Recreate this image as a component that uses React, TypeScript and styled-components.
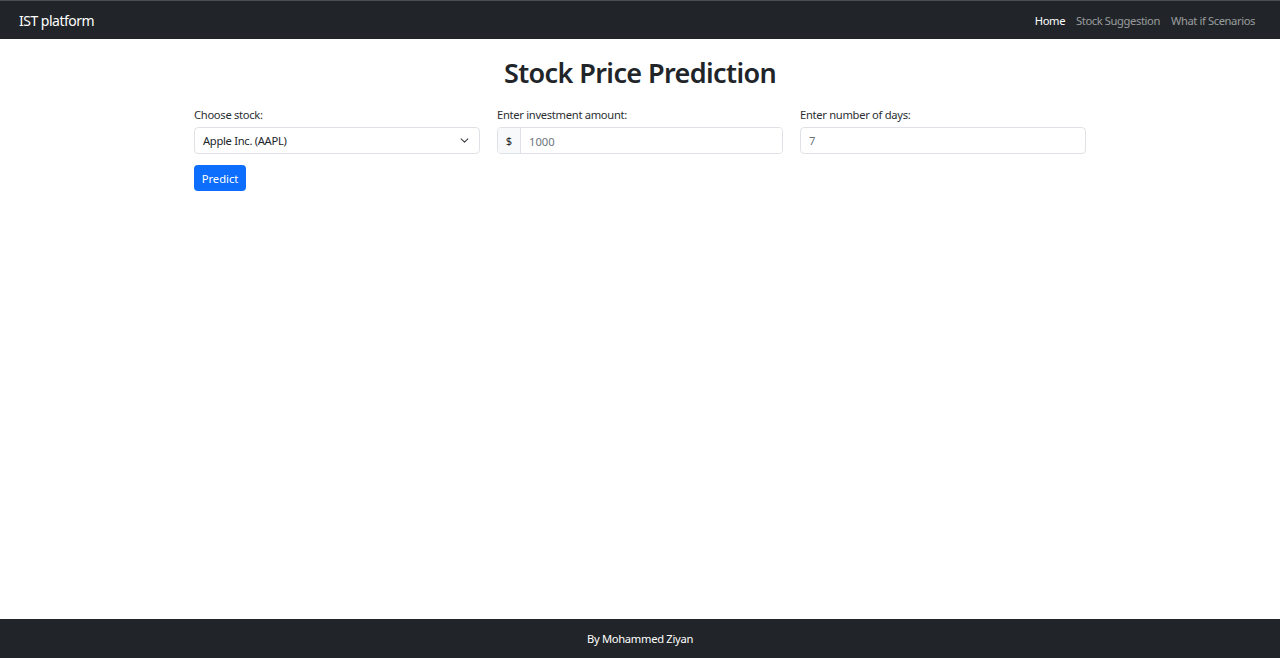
import React, { useState } from 'react';
import styled, { createGlobalStyle } from 'styled-components';

const GlobalStyle = createGlobalStyle`
  html, body {
    margin: 0;
    padding: 0;
    background: #fff;
    font-family: "Noto Sans", "Open Sans", Arial, sans-serif;
    color: #212529;
  }
  * { box-sizing: border-box; }
`;

const Page = styled.div`
  display: flex;
  flex-direction: column;
  min-height: 100vh;
`;

const Navbar = styled.nav`
  height: 39px;
  background: #212529;
  border-top: 1px solid #4b4f54;
  display: flex;
  align-items: center;
  justify-content: space-between;
  padding: 0 25px 0 19px;
`;

const Brand = styled.a`
  color: #fff;
  font-size: 14px;
  letter-spacing: -0.5px;
  text-decoration: none;
`;

const NavLinks = styled.div`
  display: flex;
  gap: 11px;
`;

const NavLink = styled.a<{ $active?: boolean }>`
  color: ${p => (p.$active ? '#fff' : 'rgba(255,255,255,0.55)')};
  font-size: 11.2px;
  letter-spacing: -0.4px;
  text-decoration: none;
`;

const Main = styled.main`
  flex: 1;
  width: 892px;
  margin: 0 auto;
`;

const Title = styled.h1`
  margin: 18px 0 18px;
  font-size: 27px;
  font-weight: 600;
  letter-spacing: -0.6px;
  text-align: center;
  line-height: 1.2;
`;

const Row = styled.div`
  display: grid;
  grid-template-columns: repeat(3, 1fr);
  gap: 17px;
`;

const Field = styled.div`
  display: flex;
  flex-direction: column;
`;

const Label = styled.label`
  font-size: 11.2px;
  letter-spacing: -0.3px;
  margin-bottom: 3px;
  line-height: 1.5;
  color: #2b2f33;
`;

const Select = styled.div`
  height: 27px;
  border: 1px solid #dee2e6;
  border-radius: 4px;
  display: flex;
  align-items: center;
  justify-content: space-between;
  padding: 0 10px 0 8px;
  font-size: 11.2px;
  letter-spacing: -0.3px;
  color: #212529;
`;

const InputGroup = styled.div`
  display: flex;
  height: 27px;
  border: 1px solid #dee2e6;
  border-radius: 4px;
  overflow: hidden;
`;

const Addon = styled.span`
  width: 23px;
  background: #f8f9fa;
  border-right: 1px solid #dee2e6;
  display: flex;
  align-items: center;
  justify-content: center;
  font-size: 11.2px;
  color: #212529;
`;

const Input = styled.input<{ $bordered?: boolean }>`
  flex: 1;
  height: 27px;
  border: ${p => (p.$bordered ? '1px solid #dee2e6' : 'none')};
  border-radius: ${p => (p.$bordered ? '4px' : '0')};
  padding: 0 8px;
  font-family: inherit;
  font-size: 11.2px;
  color: #212529;
  outline: none;
  &::placeholder { color: #6c757d; }
`;

const Button = styled.button`
  margin-top: 11px;
  height: 26px;
  width: 52px;
  background: #0d6efd;
  color: #fff;
  border: none;
  border-radius: 4px;
  font-family: inherit;
  font-size: 11.2px;
  cursor: pointer;
`;

const Footer = styled.footer`
  height: 39px;
  background: #212529;
  color: #fff;
  display: flex;
  align-items: center;
  justify-content: center;
  font-size: 11.2px;
  letter-spacing: -0.3px;
`;

const Chevron = () => (
  <svg width="9" height="9" viewBox="0 0 16 16" fill="none">
    <path d="m2 5 6 6 6-6" stroke="#343a40" strokeWidth="1.8" strokeLinecap="round" strokeLinejoin="round" />
  </svg>
);

export default function App() {
  const [amount, setAmount] = useState('');
  const [days, setDays] = useState('');

  return (
    <Page>
      <GlobalStyle />
      <Navbar>
        <Brand href="#">IST platform</Brand>
        <NavLinks>
          <NavLink $active href="#">Home</NavLink>
          <NavLink href="#">Stock Suggestion</NavLink>
          <NavLink href="#">What if Scenarios</NavLink>
        </NavLinks>
      </Navbar>
      <Main>
        <Title>Stock Price Prediction</Title>
        <Row>
          <Field>
            <Label>Choose stock:</Label>
            <Select>
              <span>Apple Inc. (AAPL)</span>
              <Chevron />
            </Select>
          </Field>
          <Field>
            <Label>Enter investment amount:</Label>
            <InputGroup>
              <Addon>$</Addon>
              <Input placeholder="1000" value={amount} onChange={e => setAmount(e.target.value)} />
            </InputGroup>
          </Field>
          <Field>
            <Label>Enter number of days:</Label>
            <Input $bordered placeholder="7" value={days} onChange={e => setDays(e.target.value)} />
          </Field>
        </Row>
        <Button>Predict</Button>
      </Main>
      <Footer>By Mohammed Ziyan</Footer>
    </Page>
  );
}
